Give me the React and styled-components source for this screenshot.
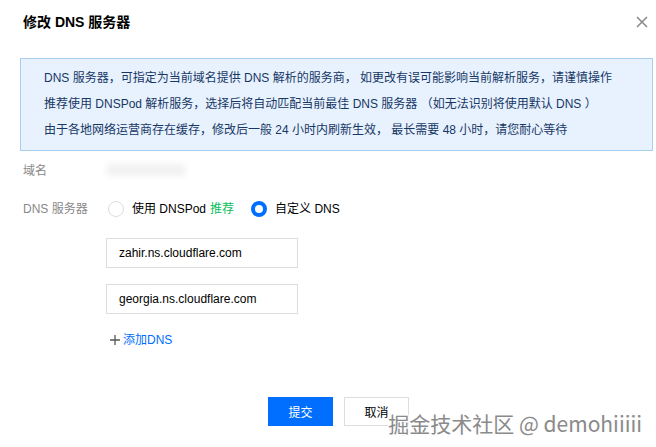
import React, { useState } from 'react'
import styled, { createGlobalStyle } from 'styled-components'

const GlobalStyle = createGlobalStyle`
  html, body {
    margin: 0;
    padding: 0;
    background: #fff;
  }
  body {
    font-family: "Liberation Sans", Arial, "Noto Sans CJK SC", sans-serif;
    font-size: 12px;
    color: #000;
  }
`

const Dialog = styled.div`
  position: relative;
  width: 656px;
  height: 447px;
  overflow: hidden;
  background: #fff;
`

const Header = styled.div`
  display: flex;
  align-items: center;
  justify-content: space-between;
  padding: 12px 7px 0 23px;
  height: 20px;
`

const Title = styled.h3`
  margin: 0;
  font-size: 14px;
  font-weight: bold;
  line-height: 20px;
  color: #000;
`

const Close = styled.button`
  border: 0;
  background: none;
  padding: 0;
  width: 14px;
  height: 14px;
  display: flex;
  align-items: center;
  justify-content: center;
  cursor: pointer;
`

const Alert = styled.div`
  margin: 26px 3px 0 20px;
  padding: 6px 23px 7px;
  background: #e7f2fe;
  border: 1px solid #a9cfee;
  color: #173765;
  line-height: 26px;
`

const Form = styled.div`
  padding: 10px 0 0 23px;
`

const Row = styled.div`
  display: grid;
  grid-template-columns: 84px 1fr;
  align-items: center;
  min-height: 20px;
  margin-bottom: ${p => p.$gap || 18}px;
`

const Label = styled.span`
  color: #888;
  line-height: 20px;
`

const Hidden = styled.span`
  display: inline-block;
  width: 78px;
  height: 12px;
  background: #f1f1f1;
  filter: blur(3px);
`

const RadioGroup = styled.div`
  display: flex;
  align-items: center;
`

const RadioItem = styled.label`
  display: flex;
  align-items: center;
  margin-right: 16px;
  cursor: pointer;
  line-height: 20px;
`

const RadioDot = styled.span`
  box-sizing: border-box;
  width: 16px;
  height: 16px;
  border-radius: 50%;
  margin: 0 8px 0 1px;
  background: #fff;
  border: ${p => (p.$on ? '4px solid #006eff' : '1px solid #ddd')};
`

const Tag = styled.span`
  color: #0abf5b;
  margin-left: 4px;
`

const Inputs = styled.div`
  display: flex;
  flex-direction: column;
  gap: 16px;
  padding-left: 106px;
  margin-bottom: 16px;
`

const Input = styled.input`
  box-sizing: border-box;
  width: 192px;
  height: 30px;
  padding: 0 12px;
  border: 1px solid #ddd;
  font-family: "Liberation Sans", Arial, sans-serif;
  font-size: 12px;
  color: #000;
  outline: none;
`

const AddLink = styled.a`
  display: flex;
  align-items: center;
  gap: 2px;
  margin-left: 109px;
  line-height: 20px;
  color: #006eff;
  cursor: pointer;
`

const Footer = styled.div`
  display: flex;
  justify-content: center;
  gap: 11px;
  padding-left: 21px;
  margin-top: 47px;
`

const Button = styled.button`
  box-sizing: border-box;
  width: 65px;
  height: 29px;
  font-family: "Liberation Sans", "Noto Sans CJK SC", sans-serif;
  font-size: 12px;
  border: 1px solid ${p => (p.$primary ? '#006eff' : '#ddd')};
  background: ${p => (p.$primary ? '#006eff' : '#fff')};
  color: ${p => (p.$primary ? '#fff' : '#000')};
  cursor: pointer;
`

const Watermark = styled.div`
  position: absolute;
  right: 14px;
  bottom: 13px;
  font-family: "Noto Sans CJK SC", sans-serif;
  font-size: 21px;
  line-height: 21px;
  color: #8a8a8a;
  text-shadow: 1px 1px 0 #fff, -1px -1px 0 #fff, 1px -1px 0 #fff, -1px 1px 0 #fff, 0 0 2px #ddd;
  pointer-events: none;
  white-space: nowrap;
`

const servers = ['zahir.ns.cloudflare.com', 'georgia.ns.cloudflare.com']

export default function App() {
  const [mode, setMode] = useState('custom')

  return (
    <Dialog>
      <GlobalStyle />
      <Header>
        <Title>修改 DNS 服务器</Title>
        <Close aria-label="关闭">
          <svg width="12" height="12" viewBox="0 0 12 12">
            <path d="M1 1L11 11M11 1L1 11" stroke="#888" strokeWidth="1.5" />
          </svg>
        </Close>
      </Header>

      <Alert>
        <div>DNS 服务器，可指定为当前域名提供 DNS 解析的服务商， 如更改有误可能影响当前解析服务，请谨慎操作</div>
        <div>推荐使用 DNSPod 解析服务，选择后将自动匹配当前最佳 DNS 服务器 （如无法识别将使用默认 DNS ）</div>
        <div>由于各地网络运营商存在缓存，修改后一般 24 小时内刷新生效， 最长需要 48 小时，请您耐心等待</div>
      </Alert>

      <Form>
        <Row>
          <Label>域名</Label>
          <span><Hidden /></span>
        </Row>
        <Row $gap={19}>
          <Label>DNS 服务器</Label>
          <RadioGroup>
            <RadioItem onClick={() => setMode('dnspod')}>
              <RadioDot $on={mode === 'dnspod'} />
              使用 DNSPod<Tag>推荐</Tag>
            </RadioItem>
            <RadioItem onClick={() => setMode('custom')}>
              <RadioDot $on={mode === 'custom'} />
              自定义 DNS
            </RadioItem>
          </RadioGroup>
        </Row>
      </Form>

      <Inputs>
        {servers.map(s => (
          <Input key={s} defaultValue={s} />
        ))}
      </Inputs>

      <AddLink>
        <svg width="12" height="12" viewBox="0 0 12 12">
          <path d="M6 1V11M1 6H11" stroke="#555" strokeWidth="1.3" />
        </svg>
        添加DNS
      </AddLink>

      <Footer>
        <Button $primary>提交</Button>
        <Button>取消</Button>
      </Footer>

      <Watermark>掘金技术社区 @ demohiiiii</Watermark>
    </Dialog>
  )
}
